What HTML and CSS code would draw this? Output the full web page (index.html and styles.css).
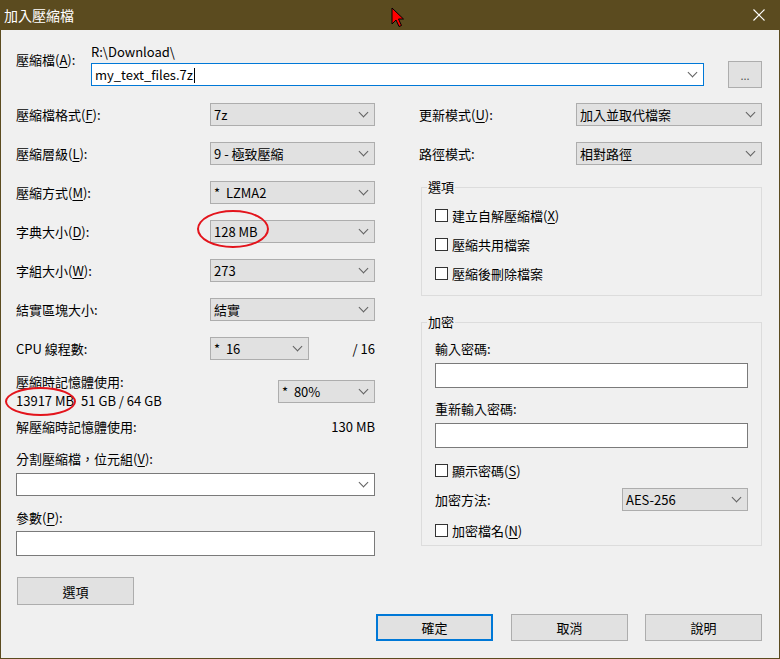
FILE: index.html
```html
<!DOCTYPE html>
<html lang="zh-Hant">
  <head>
    <meta charset="UTF-8" />
    <title>加入壓縮檔</title>
    <link rel="stylesheet" href="styles.css">
  </head>
  <body>
    <div class="window">
      <div class="titlebar">
        <span class="title">加入壓縮檔</span>
        <svg class="close" width="12" height="12" viewBox="0 0 12 12">
          <path d="M0.5 0.5 L11.5 11.5 M11.5 0.5 L0.5 11.5" stroke="#fff" stroke-width="1.1" fill="none" />
        </svg>
      </div>

      <div class="frame">
        <div class="archive-row">
          <div class="archive-label">壓縮檔(<u>A</u>):</div>
          <div class="archive-path">
            <div class="path-dir">R:\Download\</div>
            <div class="combo edit focused">
              <span class="combo-text">my_text_files.7z<span class="caret"></span></span>
            </div>
          </div>
          <button class="btn btn-browse">...</button>
        </div>

        <div class="columns">
          <!-- left side -->
          <div class="col-left">
            <div class="rows">
              <div class="row">
                <span>壓縮檔格式(<u>F</u>):</span>
                <div class="combo"><span class="combo-text">7z</span></div>
              </div>
              <div class="row">
                <span>壓縮層級(<u>L</u>):</span>
                <div class="combo"><span class="combo-text">9 - 極致壓縮</span></div>
              </div>
              <div class="row">
                <span>壓縮方式(<u>M</u>):</span>
                <div class="combo"><span class="combo-text">*&nbsp; LZMA2</span></div>
              </div>
              <div class="row">
                <span>字典大小(<u>D</u>):</span>
                <div class="combo"><span class="combo-text">128 MB</span></div>
              </div>
              <div class="row">
                <span>字組大小(<u>W</u>):</span>
                <div class="combo"><span class="combo-text">273</span></div>
              </div>
              <div class="row">
                <span>結實區塊大小:</span>
                <div class="combo"><span class="combo-text">結實</span></div>
              </div>
              <div class="row">
                <span class="grow">CPU 線程數:</span>
                <div class="combo combo-cpu"><span class="combo-text">*&nbsp; 16</span></div>
                <span class="cpu-max">/ 16</span>
              </div>
            </div>

            <div class="mem">
              <div class="mem-text">
                <div>壓縮時記憶體使用:</div>
                <div>13917 MB<span class="mem-total">51 GB / 64 GB</span></div>
              </div>
              <div class="combo combo-mem"><span class="combo-text">*&nbsp; 80%</span></div>
            </div>

            <div class="decomp">
              <span>解壓縮時記憶體使用:</span>
              <span>130 MB</span>
            </div>

            <div class="split-label">分割壓縮檔，位元組(<u>V</u>):</div>
            <div class="combo edit split-combo"><span class="combo-text"></span></div>

            <div class="params-label">參數(<u>P</u>):</div>
            <div class="textbox"></div>

            <button class="btn btn-options">選項</button>
          </div>

          <!-- right side -->
          <div class="col-right">
            <div class="rows">
              <div class="row">
                <span>更新模式(<u>U</u>):</span>
                <div class="combo combo-wide"><span class="combo-text">加入並取代檔案</span></div>
              </div>
              <div class="row">
                <span>路徑模式:</span>
                <div class="combo combo-wide"><span class="combo-text">相對路徑</span></div>
              </div>
            </div>

            <fieldset class="group group-options">
              <legend>選項</legend>
              <div class="checks">
                <div class="check"><span class="box"></span><span>建立自解壓縮檔(<u>X</u>)</span></div>
                <div class="check"><span class="box"></span><span>壓縮共用檔案</span></div>
                <div class="check"><span class="box"></span><span>壓縮後刪除檔案</span></div>
              </div>
            </fieldset>

            <fieldset class="group group-crypt">
              <legend>加密</legend>
              <div class="field-label first">輸入密碼:</div>
              <div class="textbox"></div>
              <div class="field-label">重新輸入密碼:</div>
              <div class="textbox"></div>
              <div class="check show-pass"><span class="box"></span><span>顯示密碼(<u>S</u>)</span></div>
              <div class="method-row">
                <span>加密方法:</span>
                <div class="combo combo-method"><span class="combo-text">AES-256</span></div>
              </div>
              <div class="check crypt-names"><span class="box"></span><span>加密檔名(<u>N</u>)</span></div>
            </fieldset>
          </div>
        </div>

        <div class="actions">
          <button class="btn btn-default">確定</button>
          <button class="btn">取消</button>
          <button class="btn">說明</button>
        </div>
      </div>

      <!-- red markup drawn over the screenshot -->
      <div class="mark mark-dict"></div>
      <div class="mark mark-mem"></div>
      <svg class="pointer" width="14" height="21" viewBox="-1 -1 14 21">
        <path d="M0 0 L0 16 L4 12 L7 18.5 L9.5 17.5 L6.5 11 L11.5 11 Z" fill="#f00" stroke="#000" stroke-width="1" stroke-linejoin="round" />
      </svg>
    </div>
  </body>
</html>
```

FILE: styles.css
```css
* {
  box-sizing: border-box;
}

body {
  margin: 0;
  font-family: "Noto Sans CJK TC", "Noto Sans", sans-serif;
  font-size: 13px;
  color: #000;
  background: #f0f0f0;
}

u {
  text-decoration-thickness: 1px;
  text-underline-offset: 2px;
}

.window {
  position: relative;
  width: 780px;
  height: 659px;
  display: flex;
  flex-direction: column;
  background: #f0f0f0;
}

.titlebar {
  height: 30px;
  flex: none;
  display: flex;
  align-items: center;
  justify-content: space-between;
  padding: 0 15px 0 4px;
  background: #5b4b1f;
  color: #fff;
  font-size: 14px;
}

.frame {
  flex: 1;
  border: 1px solid #5b4b1f;
  border-top: 0;
  padding: 0 16px 0 15px;
}

/* archive path */
.archive-row {
  display: flex;
  margin-top: 14px;
}

.archive-label {
  width: 75px;
  margin-top: 8px;
  line-height: 16px;
}

.archive-path {
  width: 613px;
}

.path-dir {
  line-height: 16px;
}

.archive-path .combo {
  margin-top: 3px;
}

.caret {
  display: inline-block;
  width: 1px;
  height: 15px;
  margin-left: 1px;
  background: #000;
  vertical-align: -3px;
}

/* combo boxes */
.combo {
  height: 23px;
  display: flex;
  align-items: center;
  padding-left: 3px;
  background: #e1e1e1;
  border: 1px solid #adadad;
  line-height: 19px;
  white-space: nowrap;
}

.combo::after {
  content: "";
  width: 6px;
  height: 6px;
  margin: 0 7px 4px 0;
  border-right: 1px solid #606060;
  border-bottom: 1px solid #606060;
  transform: rotate(45deg);
}

.combo-text {
  flex: 1;
}

.combo.edit {
  background: #fff;
  border-color: #7a7a7a;
}

.combo.focused {
  border-color: #0078d7;
}

/* buttons */
.btn {
  height: 27px;
  width: 117px;
  padding: 0;
  font: inherit;
  color: #000;
  background: #e1e1e1;
  border: 1px solid #adadad;
}

.btn-browse {
  width: 34px;
  margin: 17px 0 0 24px;
  color: #555;
  font-size: 11px;
}

.btn-default {
  border-color: #0078d7;
  box-shadow: inset 0 0 0 1px #0078d7;
  margin-right: 1px;
}

/* columns */
.columns {
  display: grid;
  grid-template-columns: 359px 343px;
  column-gap: 44px;
  margin-top: 15px;
}

.rows {
  display: flex;
  flex-direction: column;
  gap: 16px;
}

.row {
  height: 23px;
  display: flex;
  align-items: center;
  justify-content: space-between;
  line-height: 19px;
}

.row .combo {
  width: 165px;
}

.grow {
  flex: 1;
}

.row .combo-cpu {
  width: 99px;
}

.cpu-max {
  width: 66px;
  text-align: right;
}

.mem {
  margin-top: 12px;
  display: flex;
  align-items: center;
  justify-content: space-between;
  line-height: 19px;
}

.mem-total {
  margin-left: 7px;
}

.combo-mem {
  width: 97px;
  margin-top: 1px;
}

.decomp {
  margin-top: 7px;
  display: flex;
  justify-content: space-between;
  line-height: 19px;
}

.split-label {
  margin-top: 13px;
  line-height: 19px;
}

.split-combo {
  margin-top: 5px;
  border-color: #a0a0a0;
}

.params-label {
  margin-top: 12px;
  line-height: 19px;
}

.textbox {
  height: 25px;
  margin-top: 4px;
  background: #fff;
  border: 1px solid #7a7a7a;
}

.btn-options {
  height: 28px;
  margin: 21px 0 0 1px;
}

/* right column */
.row .combo-wide {
  width: 186px;
}

.group {
  margin: 14px 0 0 2px;
  padding: 0 13px 12px;
  border: 1px solid #dcdcdc;
  min-width: 0;
}

.group legend {
  padding: 0 1px;
  margin-left: -8px;
  line-height: 16px;
}

.checks {
  display: flex;
  flex-direction: column;
  gap: 10px;
  padding-top: 11px;
}

.check {
  height: 19px;
  display: flex;
  align-items: center;
  gap: 4px;
}

.box {
  width: 13px;
  height: 13px;
  background: #fff;
  border: 1px solid #333;
}

.group-crypt {
  margin-top: 18px;
  padding-bottom: 5px;
}

.field-label {
  margin-top: 11px;
  line-height: 19px;
}

.field-label.first {
  margin-top: 9px;
}

.group-crypt .textbox {
  margin-top: 5px;
}

.show-pass {
  margin-top: 13px;
}

.method-row {
  margin-top: 8px;
  display: flex;
  align-items: center;
  justify-content: space-between;
}

.combo-method {
  width: 126px;
}

.crypt-names {
  margin-top: 10px;
}

/* dialog buttons */
.actions {
  display: flex;
  justify-content: flex-end;
  gap: 17px;
  margin-top: 9px;
  padding-right: 1px;
}

/* annotations */
.mark {
  position: absolute;
  border: 2px solid #e3141c;
  border-radius: 50%;
}

.mark-dict {
  left: 197px;
  top: 210px;
  width: 72px;
  height: 38px;
}

.mark-mem {
  left: 5px;
  top: 387px;
  width: 71px;
  height: 29px;
}

.pointer {
  position: absolute;
  left: 391px;
  top: 7px;
}
```
